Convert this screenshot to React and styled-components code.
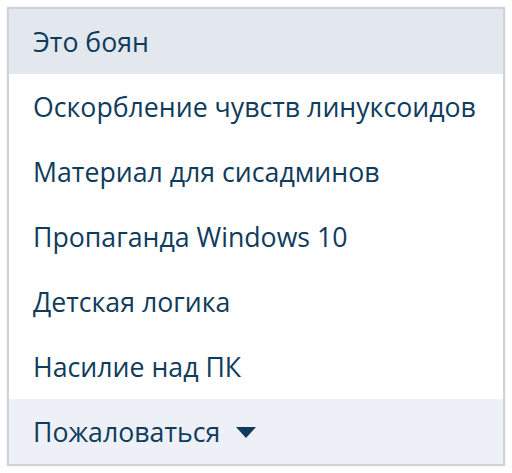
import React from "react";
import styled, { createGlobalStyle } from "styled-components";

const Global = createGlobalStyle`
  html, body { margin: 0; padding: 0; background: #ffffff; }
  body { padding: 7px; box-sizing: border-box; }
`;

const Menu = styled.div`
  width: 498px;
  box-sizing: border-box;
  border: 2px solid #cfd2d6;
  box-shadow: 0 0 2px rgba(0,0,0,0.12);
  background: #ffffff;
  display: flex;
  flex-direction: column;
  font-family: "Open Sans", "Noto Sans", sans-serif;
`;

const Item = styled.div`
  height: 65px;
  display: flex;
  align-items: center;
  padding-left: 24px;
  font-size: 26.7px;
  color: #0f3c5c;
  background: ${(p) => (p.$active ? "#e3e7ee" : p.$footer ? "#edf0f6" : "#ffffff")};
  gap: 16px;
  white-space: nowrap;
`;

const Caret = styled.svg`
  width: 20px;
  height: 11px;
  margin-top: 2px;
`;

const items = [
  "Оскорбление чувств линуксоидов",
  "Материал для сисадминов",
  "Пропаганда Windows 10",
  "Детская логика",
  "Насилие над ПК",
];

export default function App() {
  return (
    <>
      <Global />
      <Menu>
        <Item $active>Это боян</Item>
        {items.map((t) => (
          <Item key={t}>{t}</Item>
        ))}
        <Item $footer>
          Пожаловаться
          <Caret viewBox="0 0 20 11">
            <path d="M0 0 H20 L10 11 Z" fill="#0f3c5c" />
          </Caret>
        </Item>
      </Menu>
    </>
  );
}
